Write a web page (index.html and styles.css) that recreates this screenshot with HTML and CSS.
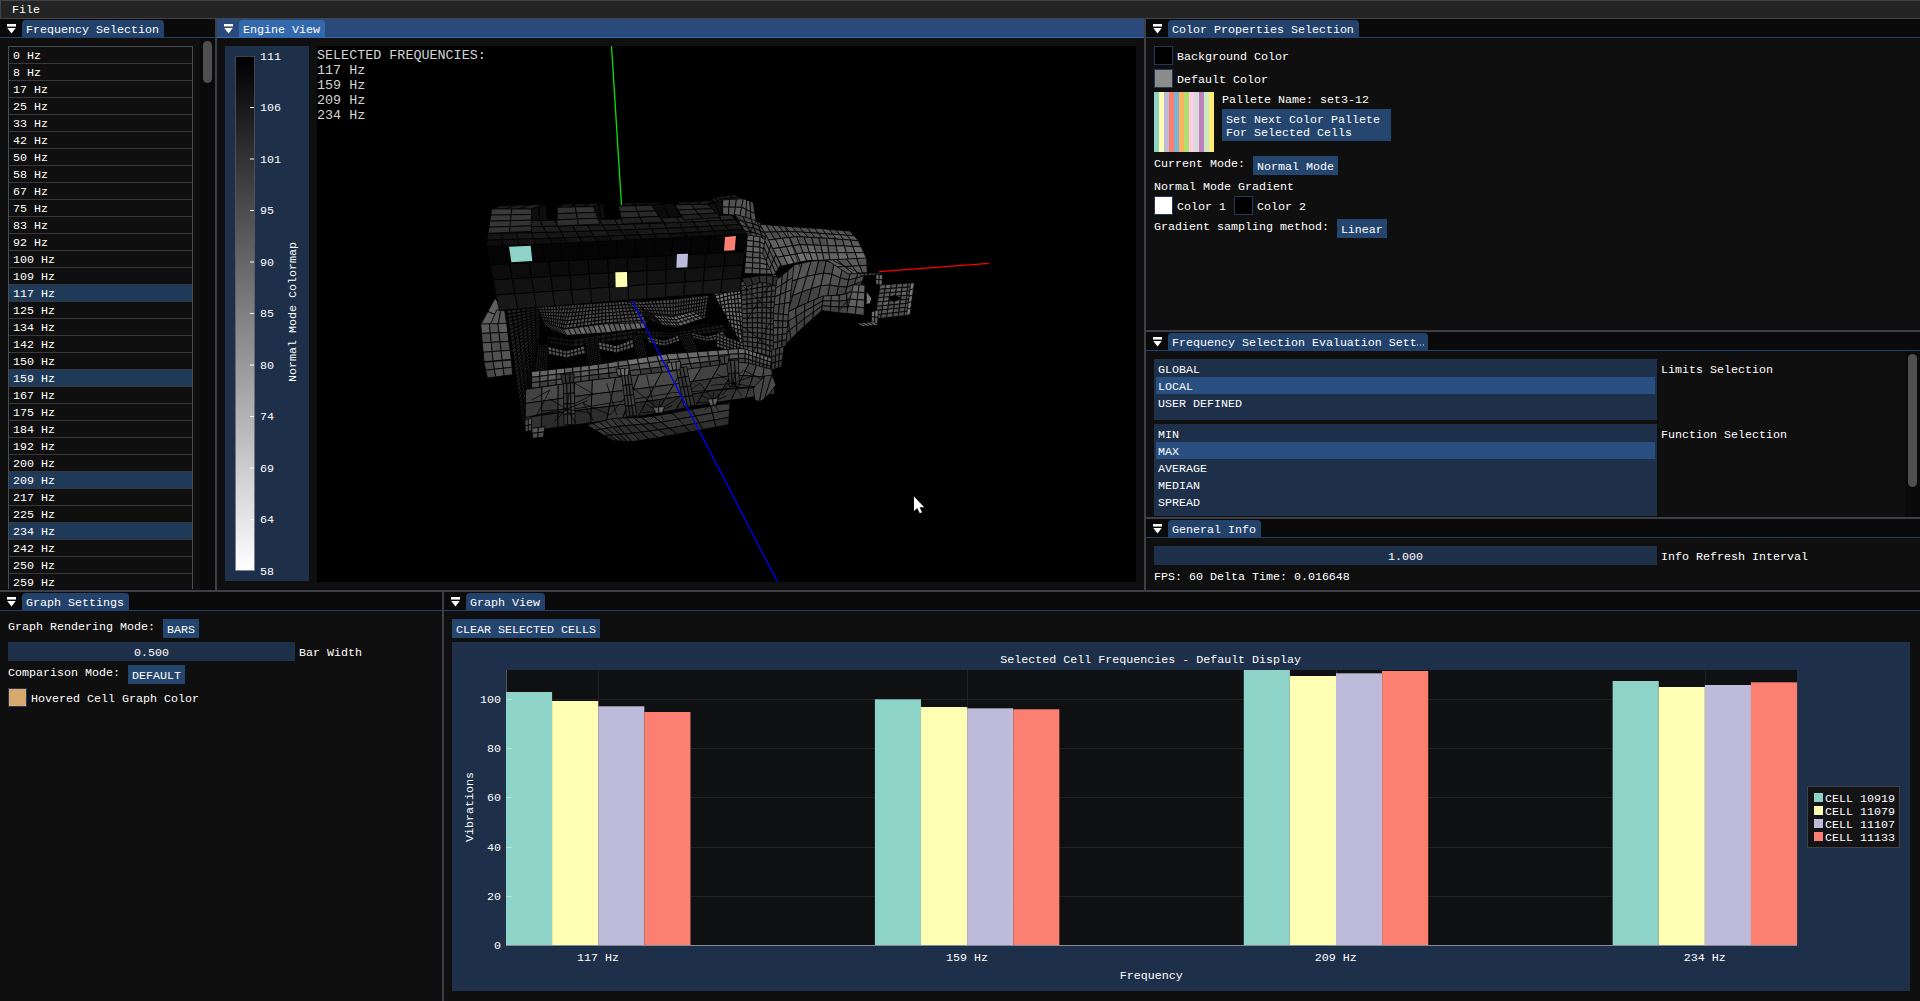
FILE: index.html
```html
<!DOCTYPE html>
<html lang="en">
<head>
<meta charset="utf-8">
<title>Engine Vibration Viewer</title>
<link rel="stylesheet" href="styles.css">
</head>
<body>
<svg class="defs" width="0" height="0"><symbol id="arrow" viewBox="0 0 9 10"><path d="M0 0h9v2H0z" fill="#fff"/><path d="M0 2h9v1H0z" fill="#999"/><path d="M.3 4h8.4L4.5 9.6z" fill="#fff"/></symbol></svg>
<div class="app">
  <nav class="menu"><span class="t">File</span></nav>
  <div class="upper">
    <section class="panel freq">
      <header class="bar"><svg class="arrow"><use href="#arrow"/></svg><span class="tab"><span class="t">Frequency Selection</span></span></header>
      <div class="freq-body"><div class="table" id="freqs"></div><div class="track"><div class="grab grab-freq"></div></div></div>
    </section>
    <section class="panel engine">
      <header class="bar focused"><svg class="arrow"><use href="#arrow"/></svg><span class="tab"><span class="t">Engine View</span></span></header>
      <div class="engine-body">
        <svg class="colormap" id="colormap" width="84" height="535" viewBox="0 0 84 535">
          <defs><linearGradient id="ramp" x1="0" y1="0" x2="0" y2="1"><stop offset="0" stop-color="#000"/><stop offset="1" stop-color="#fff"/></linearGradient></defs>
          <rect x="10.5" y="10.5" width="19" height="514" fill="url(#ramp)" stroke="#6e6e80" stroke-opacity=".5"/>
          <text transform="translate(71 266) rotate(-90)" text-anchor="middle">Normal Mode Colormap</text>
        </svg>
        <svg class="view" id="view" width="819" height="536" viewBox="0 0 819 536">
          <g id="model" transform="translate(143 124) scale(.33333)"></g>
          <path d="M294.5 0L304.5 159" stroke="#00e600" stroke-width="1.3" fill="none"/>
          <path d="M562 225.7L672 217.3" stroke="#ff0000" stroke-width="1.3" fill="none"/>
          <path d="M315 255L460.5 536" stroke="#0000f0" stroke-width="1.4" fill="none"/>
          <g class="hud"><text x="0" y="12.5">SELECTED FREQUENCIES:</text><text x="0" y="27.5">117 Hz</text><text x="0" y="42.5">159 Hz</text><text x="0" y="57.5">209 Hz</text><text x="0" y="72.5">234 Hz</text></g>
          <path d="M597 450.5v14.5l3.2-3 2.6 5.2 2.2-1-2.4-5h4.6z" fill="#fff"/>
        </svg>
      </div>
    </section>
    <div class="side">
      <section class="panel colors">
        <header class="bar"><svg class="arrow"><use href="#arrow"/></svg><span class="tab"><span class="t">Color Properties Selection</span></span></header>
        <div class="body">
          <div class="row"><i class="sw black"></i><span class="t lab">Background Color</span></div>
          <div class="row"><i class="sw gray"></i><span class="t lab">Default Color</span></div>
          <div class="row wide"><div class="palette" id="palette"></div><div class="stack"><span class="t">Pallete Name: set3-12</span><button class="btn big"><span class="t">Set Next Color Pallete</span><span class="t">For Selected Cells</span></button></div></div>
          <div class="row wide"><span class="t">Current Mode:</span><button class="btn"><span class="t">Normal Mode</span></button></div>
          <span class="t">Normal Mode Gradient</span>
          <div class="row wide"><div class="row"><i class="sw white"></i><span class="t lab">Color 1</span></div><div class="row"><i class="sw black"></i><span class="t lab">Color 2</span></div></div>
          <div class="row wide"><span class="t">Gradient sampling method:</span><button class="btn"><span class="t">Linear</span></button></div>
        </div>
      </section>
      <section class="panel eval">
        <header class="bar"><svg class="arrow"><use href="#arrow"/></svg><span class="tab"><span class="t">Frequency Selection Evaluation Sett<svg class="dots" viewBox="0 0 7 2"><path d="M0 .5h1v1H0zM3 .5h1v1H3zM6 .5h1v1H6z" fill="#fff"/></svg></span></span></header>
        <div class="eval-body">
          <div class="lists">
            <div class="row"><div class="list"><span class="t">GLOBAL</span><span class="t on">LOCAL</span><span class="t">USER DEFINED</span></div><span class="t lab">Limits Selection</span></div>
            <div class="row"><div class="list tall"><span class="t">MIN</span><span class="t on">MAX</span><span class="t">AVERAGE</span><span class="t">MEDIAN</span><span class="t">SPREAD</span></div><span class="t lab">Function Selection</span></div>
          </div>
          <div class="track"><div class="grab grab-eval"></div></div>
        </div>
      </section>
      <section class="panel info">
        <header class="bar"><svg class="arrow"><use href="#arrow"/></svg><span class="tab"><span class="t">General Info</span></span></header>
        <div class="body">
          <div class="row"><div class="field w503"><span class="t">1.000</span></div><span class="t lab">Info Refresh Interval</span></div>
          <span class="t">FPS: 60 Delta Time: 0.016648</span>
        </div>
      </section>
    </div>
  </div>
  <div class="lower">
    <section class="panel settings">
      <header class="bar"><svg class="arrow"><use href="#arrow"/></svg><span class="tab"><span class="t">Graph Settings</span></span></header>
      <div class="body">
        <div class="row wide"><span class="t">Graph Rendering Mode:</span><button class="btn"><span class="t">BARS</span></button></div>
        <div class="row"><div class="field w287"><span class="t">0.500</span></div><span class="t lab">Bar Width</span></div>
        <div class="row wide"><span class="t">Comparison Mode:</span><button class="btn"><span class="t">DEFAULT</span></button></div>
        <div class="row"><i class="sw tan"></i><span class="t lab">Hovered Cell Graph Color</span></div>
      </div>
    </section>
    <section class="panel graph">
      <header class="bar"><svg class="arrow"><use href="#arrow"/></svg><span class="tab"><span class="t">Graph View</span></span></header>
      <div class="body">
        <div class="row"><button class="btn"><span class="t">CLEAR SELECTED CELLS</span></button></div>
        <svg class="plot" id="plot" width="1458" height="349" viewBox="452 642 1458 349"></svg>
      </div>
    </section>
  </div>
</div>
<script src="app.js"></script>
</body>
</html>
```
FILE: styles.css
```css
* { box-sizing: border-box; }
body { margin: 0; background: #0f0f0f; color: #fff; font: 11.667px/11px "Liberation Mono", monospace; overflow: hidden; }
.defs { position: absolute; }
.app { width: 1920px; height: 1001px; display: flex; flex-direction: column; background: #3e3e46; }
.t { display: block; height: 13px; padding-top: 3px; line-height: 11px; white-space: pre; }
.menu { height: 19px; padding: 1px 11px; background: #242424; border: 1px solid #43434b; border-right: 0; }
.upper { height: 571px; display: flex; gap: 2px; }
.lower { flex: 1; display: flex; gap: 2px; margin-top: 2px; }
.panel { background: #0f0f0f; display: flex; flex-direction: column; overflow: hidden; }
.freq { width: 215px; }
.engine { width: 927px; }
.side { width: 774px; display: flex; flex-direction: column; gap: 2px; }
.colors { height: 311px; }
.eval { height: 185px; }
.info { height: 71px; }
.settings { width: 442px; }
.graph { width: 1476px; }

.bar { height: 19px; flex: none; display: flex; background: #0a0a0a; border-bottom: 1px solid #23426b; padding: 1px 0 0 7px; }
.arrow { width: 9px; height: 10px; margin: 4px 6px 0 0; }
.tab { height: 17px; padding: 2px 5px 0 4px; background: #23426b; border-radius: 4px 4px 0 0; }
.bar.focused { background: #294a7a; border-color: #3369ad; }
.focused .tab { background: #3369ad; }
.dots { width: 7px; height: 2px; margin-right: -1px; }
.body { padding: 8px; display: flex; flex-direction: column; gap: 4px; }
.row { display: flex; align-items: flex-start; gap: 4px; }
.row.wide { gap: 8px; }
.lab { margin-top: 3px; }
.btn { border: 0; margin: 0; color: inherit; font: inherit; text-align: left; height: 19px; padding: 3px 4px; background: #24456d; }
.btn.big { width: 169px; height: 32px; }
.stack { display: flex; flex-direction: column; gap: 4px; }
.sw { width: 19px; height: 19px; border: 1px solid #25365a; }
.black { background: #000; }
.gray { background: #8c8c8c; }
.white { background: #fff; }
.tan { background: #d6a96f; }
.palette { width: 60px; height: 60px; display: flex; }
.palette i { flex: 1; }
.field { height: 19px; padding-top: 3px; background: #1d2f49; text-align: center; }
.w503 { width: 503px; }
.w287 { width: 287px; }

.freq-body { display: flex; height: 552px; padding-top: 8px; justify-content: space-between; }
.table { width: 185px; height: 543px; margin-left: 8px; border: 1px solid #4c4c55; border-bottom: 0; overflow: hidden; }
.table .t { height: 17px; padding: 4px 0 0 4px; border-bottom: 1px solid #38383f; }
.table .on { background: #1f3958; }
.track { width: 15px; background: #0a0a0a; margin-top: -8px; padding: 3px; }
.grab { width: 9px; border-radius: 5px; background: #4f4f4f; }
.grab-freq { height: 42px; }
.grab-eval { height: 133px; }

.engine-body { display: flex; gap: 8px; padding: 8px; }
.colormap { background: #1d2f49; }
.view { background: #000; }
svg text { fill: #fff; font: 11.667px "Liberation Mono", monospace; white-space: pre; }
svg .hud text { font-size: 13.4px; fill: #d4d4d4; }

.eval-body { display: flex; justify-content: space-between; height: 166px; padding-top: 8px; }
.lists { height: 157px; padding-left: 8px; display: flex; flex-direction: column; gap: 4px; overflow: hidden; }
.list { width: 503px; height: 61px; padding: 1px 2px; background: #1d2f49; }
.list.tall { height: 95px; }
.list .t { height: 17px; padding: 5px 2px 0; }
.list .on { background: #294f80; }
.plot { background: #1d2f49; }
```
FILE: app.js
```js
const NS = 'http://www.w3.org/2000/svg';
function add(parent, tag, attrs, text) {
  const el = document.createElementNS(NS, tag);
  for (const k in attrs) el.setAttribute(k, attrs[k]);
  if (text !== undefined) el.textContent = text;
  parent.appendChild(el);
  return el;
}

// Frequency table
const selected = [117, 159, 209, 234];
[0, 8, 17, 25, 33, 42, 50, 58, 67, 75, 83, 92, 100, 109, 117, 125, 134, 142, 150, 159, 167, 175, 184, 192, 200, 209, 217, 225, 234, 242, 250, 259].forEach(f => {
  const s = document.createElement('span');
  s.className = selected.includes(f) ? 't on' : 't';
  s.textContent = f + ' Hz';
  document.getElementById('freqs').appendChild(s);
});

// set3-12 palette
['#8dd3c7', '#ffffb3', '#bebada', '#fb8072', '#80b1d3', '#fdb462', '#b3de69', '#fccde5', '#d9d9d9', '#bc80bd', '#ccebc5', '#ffed6f'].forEach(c => {
  const i = document.createElement('i');
  i.style.background = c;
  document.getElementById('palette').appendChild(i);
});

// Colormap scale
const cm = document.getElementById('colormap');
[111, 106, 101, 95, 90, 85, 80, 74, 69, 64, 58].forEach((v, i) => {
  const y = 10 + i * 51.5;
  add(cm, 'text', { x: 35, y: Math.floor(y + 4) }, v);
  if (i && i < 10) add(cm, 'rect', { x: 25, y: y - 0.5, width: 4, height: 1, fill: '#fff' });
});

// Bar chart
const plot = document.getElementById('plot');
const colors = ['#8dd3c7', '#ffffb3', '#bebada', '#fb8072'];
add(plot, 'rect', { x: 506, y: 670, width: 1291, height: 275, fill: '#0f1012' });
for (let v = 0; v <= 100; v += 20) {
  const y = Math.round(945 - v * 2.459);
  if (v) add(plot, 'rect', { x: 506, y: y, width: 1291, height: 1, fill: '#222224' });
  add(plot, 'text', { x: 501, y: y + 4, 'text-anchor': 'end' }, v);
}
for (let g = 0; g < 4; g++) add(plot, 'rect', { x: Math.round(598 + 368.9 * g), y: 670, width: 1, height: 275, fill: '#222224' });
add(plot, 'rect', { x: 506, y: 670, width: 1, height: 275, fill: '#55565c' });
[[692, 701, 706.3, 712], [699.3, 707, 708.3, 709.3], [670, 676, 673.3, 671], [681, 687, 685, 682.3]].forEach((tops, g) => {
  tops.forEach((y, i) => add(plot, 'rect', { x: 506 + 46.11 * (8 * g + i), y: y, width: 46.11, height: 945 - y, fill: colors[i] }));
  add(plot, 'text', { x: 598 + 368.9 * g, y: 961, 'text-anchor': 'middle' }, selected[g] + ' Hz');
});
for (let v = 20; v <= 100; v += 20) add(plot, 'rect', { x: 506, y: Math.round(945 - v * 2.459), width: 6, height: 1, fill: '#fff', opacity: 0.35 });
add(plot, 'rect', { x: 506, y: 945, width: 1291, height: 1, fill: '#858b98' });
add(plot, 'text', { x: 1150.7, y: 662.5, 'text-anchor': 'middle' }, 'Selected Cell Frequencies - Default Display');
add(plot, 'text', { x: 1151.2, y: 978.5, 'text-anchor': 'middle' }, 'Frequency');
add(plot, 'text', { transform: 'translate(472.5 807) rotate(-90)', 'text-anchor': 'middle' }, 'Vibrations');
add(plot, 'rect', { x: 1807.5, y: 786.5, width: 92, height: 61, fill: '#141417', stroke: '#414149' });
[10919, 11079, 11107, 11133].forEach((c, i) => {
  add(plot, 'rect', { x: 1814, y: 793 + 13 * i, width: 9, height: 9, fill: colors[i] });
  add(plot, 'text', { x: 1825, y: 801.5 + 13 * i }, 'CELL ' + c);
});

// Wireframe mesh: each patch is a ruled surface between an upper and a lower polyline
const model = document.getElementById('model');
let seed = 7;
const rnd = () => (seed = (seed * 16807) % 2147483647) / 2147483647;
function at(line, t) {
  const p = Math.min(t * (line.length - 1), line.length - 1.0001), i = Math.floor(p), f = p - i;
  return [line[i][0] * (1 - f) + line[i + 1][0] * f, line[i][1] * (1 - f) + line[i + 1][1] * f];
}
function patch(a, b, cols, rows, g0, g1, sw) {
  const P = (u, v) => {
    const p = at(a, u), q = at(b, u);
    return (p[0] * (1 - v) + q[0] * v).toFixed(1) + ',' + (p[1] * (1 - v) + q[1] * v).toFixed(1);
  };
  for (let r = 0; r < rows; r++) for (let c = 0; c < cols; c++) {
    const k = Math.max(0, Math.round(g0 + (g1 - g0) * (r + 0.5) / rows + (rnd() - 0.5) * g0 * 0.22));
    const u = c / cols, U = (c + 1) / cols, v = r / rows, V = (r + 1) / rows;
    add(model, 'polygon', { points: [P(u, v), P(U, v), P(U, V), P(u, V)].join(' '), fill: `rgb(${k},${k},${k})`, stroke: '#000', 'stroke-width': sw || 2.4 });
  }
}
const poly = (pts, fill) => add(model, 'polygon', { points: pts, fill: fill });
const wires = d => add(model, 'path', { d: d, stroke: '#000', 'stroke-width': 2.2, fill: 'none' });

// bell housing
patch([[740, 95], [775, 80], [825, 74]], [[760, 104], [790, 95], [850, 88]], 6, 2, 30, 36);
patch([[788, 90], [850, 86], [880, 97]], [[788, 132], [840, 138], [890, 165]], 6, 2, 88, 80);
patch([[825, 133], [885, 150], [920, 170]], [[862, 200], [900, 205], [945, 230]], 5, 4, 68, 75);
patch([[862, 195], [900, 200], [945, 225]], [[853, 310], [900, 312], [940, 312]], 4, 7, 98, 84);
wires('M835 140L880 190M890 150L865 195M900 170L945 215');
// gearbox
patch([[900, 163], [980, 169], [1080, 176], [1170, 183]], [[925, 210], [1010, 200], [1100, 205], [1195, 212]], 13, 2, 80, 86);
patch([[925, 210], [1010, 200], [1100, 205], [1195, 212]], [[965, 288], [1040, 272], [1110, 270], [1220, 266]], 12, 3, 84, 108);
patch([[1000, 285], [1060, 272], [1110, 272], [1165, 310], [1220, 300]], [[955, 440], [1020, 408], [1090, 378], [1150, 375], [1200, 352]], 9, 3, 84, 66);
patch([[955, 440], [1020, 408], [1090, 378], [1150, 375], [1200, 352]], [[975, 525], [1020, 480], [1085, 422], [1150, 430], [1215, 435]], 10, 3, 74, 62);
patch([[1100, 270], [1220, 264]], [[1165, 312], [1222, 308]], 4, 2, 84, 96);
patch([[918, 195], [962, 285]], [[908, 250], [940, 320]], 3, 3, 78, 82);
wires('M975 168L1020 290M1120 272L1200 310M1000 286L960 350L950 430M1190 355L1140 420');
// output flange
patch([[1260, 345], [1362, 338]], [[1245, 447], [1350, 435]], 6, 8, 92, 82);
patch([[1352, 340], [1363, 338]], [[1340, 436], [1350, 434]], 1, 5, 115, 110);
poly('1284,385 1302,375 1324,384 1302,396', '#000');
patch([[1198, 310], [1268, 308]], [[1205, 318], [1250, 316]], 5, 1, 70, 70);
patch([[1248, 314], [1268, 314]], [[1247, 342], [1266, 346]], 2, 2, 115, 100);
poly('1205,340 1225,316 1248,318 1246,400 1236,450 1215,430 1200,395', '#000');
poly('1220,366 1234,385 1230,400 1220,402', '#777');
patch([[1180, 345], [1215, 345]], [[1160, 430], [1212, 436]], 2, 4, 98, 80);
patch([[1235, 425], [1255, 420]], [[1234, 455], [1253, 464]], 2, 2, 108, 98);
patch([[1190, 460], [1240, 455]], [[1210, 470], [1255, 465]], 4, 1, 105, 100);
// flywheel housing
patch([[740, 375], [800, 355], [850, 340]], [[775, 515], [820, 530], [870, 560]], 10, 15, 108, 98, 2.6);
patch([[843, 335], [900, 322], [950, 312]], [[850, 555], [900, 565], [940, 580]], 7, 16, 62, 74);
wires('M850 350L930 420M940 330L860 450M850 470L940 540M935 450L870 560');
patch([[845, 325], [910, 315], [960, 322]], [[860, 350], [910, 335], [958, 352]], 5, 1, 45, 45);
patch([[950, 330], [1002, 286]], [[940, 430], [985, 435]], 3, 4, 78, 72);
patch([[940, 430], [985, 435]], [[940, 540], [978, 528]], 3, 5, 72, 64);
patch([[935, 540], [972, 530]], [[935, 600], [965, 590]], 3, 3, 62, 56);
// crankcase interior
poly('140,415 760,370 860,550 230,620', '#020202');
patch([[140, 420], [240, 412]], [[190, 775], [238, 600]], 7, 30, 30, 34, 2.8);
patch([[235, 412], [380, 402], [530, 392]], [[255, 465], [310, 488], [430, 470], [560, 460]], 32, 7, 68, 78);
patch([[245, 450], [310, 478], [430, 462], [555, 458]], [[275, 480], [320, 496], [440, 488], [560, 474]], 24, 1, 98, 98);
patch([[500, 398], [640, 388], [745, 376]], [[565, 448], [640, 472], [735, 445]], 26, 7, 74, 72);
patch([[545, 415], [580, 435], [640, 440], [700, 425]], [[575, 452], [610, 465], [660, 468], [730, 445]], 18, 3, 104, 96);
patch([[560, 468], [640, 480], [740, 460]], [[600, 490], [680, 488], [790, 478]], 26, 3, 40, 40);
patch([[262, 498], [340, 508], [520, 480], [640, 488], [790, 462]], [[265, 520], [340, 530], [520, 505], [640, 500], [800, 485]], 44, 2, 24, 24);
patch([[235, 525], [265, 525]], [[224, 608], [262, 598]], 5, 16, 60, 55);
patch([[375, 510], [415, 503]], [[388, 592], [424, 582]], 7, 14, 54, 50);
patch([[518, 500], [545, 492]], [[536, 572], [562, 562]], 5, 12, 52, 50);
patch([[652, 495], [690, 488]], [[686, 556], [714, 546]], 6, 10, 48, 46);
patch([[264, 530], [320, 543], [372, 528]], [[266, 552], [320, 563], [376, 550]], 10, 2, 92, 86);
patch([[415, 516], [470, 527], [518, 508]], [[418, 538], [470, 548], [522, 532]], 10, 2, 92, 86);
patch([[560, 500], [612, 512], [655, 496]], [[566, 518], [612, 528], [660, 513]], 9, 2, 86, 82);
patch([[694, 488], [740, 500], [788, 485]], [[700, 504], [742, 514], [800, 502]], 9, 2, 86, 80);
patch([[770, 490], [850, 520]], [[770, 530], [850, 555]], 8, 4, 84, 76);
// oil pan rail and crankcase side
patch([[215, 605], [400, 585], [620, 552], [850, 535], [935, 565]], [[215, 655], [400, 630], [640, 605], [850, 578], [930, 600]], 30, 3, 112, 56);
patch([[197, 658], [380, 632], [640, 603], [850, 575], [935, 598]], [[195, 785], [380, 760], [560, 735], [780, 695], [945, 672]], 15, 3, 74, 44);
wires('M215 738L640 668L935 650M215 690L270 660L230 735L320 715L400 672L345 640M400 752L370 700L450 735L520 655L600 720L720 640L760 690L850 600L930 640M440 640L470 735M560 615L580 700');
patch([[880, 655], [930, 600], [948, 645]], [[885, 690], [905, 697], [930, 668]], 3, 1, 78, 70);
patch([[195, 750], [215, 745]], [[196, 785], [214, 782]], 2, 2, 92, 84);
patch([[215, 775], [255, 770]], [[218, 805], [250, 802]], 2, 2, 86, 80);
patch([[380, 765], [460, 745], [560, 742], [810, 698]], [[460, 812], [520, 815], [640, 795], [806, 764]], 13, 3, 56, 44);
patch([[310, 640], [342, 638]], [[312, 765], [346, 762]], 3, 4, 66, 54);
patch([[485, 615], [512, 612]], [[500, 740], [530, 736]], 3, 4, 68, 52);
patch([[648, 595], [680, 590]], [[672, 710], [704, 706]], 3, 4, 62, 48);
patch([[800, 572], [835, 570]], [[808, 650], [838, 648]], 3, 2, 62, 54);
[[320, 717, 75], [595, 724, 50], [758, 695, 50], [820, 640, 68]].forEach(([x, y, r]) => {
  let d = '';
  for (let i = 0; i < 7; i++) d += `M${x} ${y}L${(x + r * Math.cos(i * 0.9 + 0.3)).toFixed(0)} ${(y + r * 0.6 * Math.sin(i * 0.9 + 0.3)).toFixed(0)}`;
  wires(d);
  poly(`${x - 10},${y} ${x},${y - 4} ${x + 10},${y} ${x},${y + 6}`, '#050505');
});
patch([[302, 612], [343, 612]], [[308, 640], [340, 638]], 3, 1, 50, 44);
patch([[468, 597], [508, 594]], [[474, 618], [504, 616]], 3, 1, 104, 96);
patch([[620, 578], [662, 574]], [[628, 602], [660, 598]], 3, 1, 98, 90);
patch([[778, 560], [808, 556]], [[784, 582], [804, 580]], 2, 1, 70, 66);
patch([[578, 712], [614, 710]], [[588, 730], [606, 728]], 2, 1, 104, 98);
patch([[742, 688], [775, 684]], [[752, 708], [768, 704]], 2, 1, 90, 84);
// front cover, left
patch([[105, 385], [134, 422]], [[62, 464], [114, 460]], 1, 2, 98, 88);
patch([[110, 420], [134, 422]], [[90, 466], [140, 460]], 2, 1, 94, 90);
patch([[62, 462], [140, 460]], [[72, 575], [154, 568]], 3, 4, 88, 74);
patch([[72, 577], [154, 570]], [[82, 624], [158, 614]], 3, 2, 76, 70);
// cylinder head cover
patch([[120, 107], [258, 103]], [[95, 118], [215, 117]], 3, 1, 30, 30);
patch([[310, 102], [432, 99]], [[292, 113], [400, 110]], 3, 1, 24, 24);
patch([[500, 98], [620, 96]], [[475, 108], [575, 106]], 3, 1, 20, 20);
patch([[660, 96], [760, 92]], [[645, 106], [742, 104]], 3, 1, 24, 24);
patch([[215, 117], [258, 103]], [[215, 155], [262, 152]], 2, 1, 14, 14);
patch([[400, 110], [432, 99]], [[412, 148], [434, 148]], 2, 1, 14, 14);
patch([[575, 106], [640, 98]], [[600, 146], [660, 140]], 2, 1, 12, 12);
patch([[742, 104], [786, 92]], [[775, 138], [786, 134]], 2, 1, 14, 14);
patch([[88, 152], [250, 152], [440, 148], [640, 142], [815, 135]], [[78, 230], [290, 222], [480, 214], [670, 205], [862, 192]], 17, 4, 38, 14);
patch([[95, 117], [215, 117]], [[84, 190], [214, 184]], 2, 4, 62, 44);
patch([[292, 112], [400, 110]], [[291, 168], [420, 162]], 2, 3, 56, 38);
patch([[475, 108], [575, 106]], [[488, 162], [608, 156]], 2, 3, 46, 32);
patch([[645, 105], [742, 103]], [[672, 150], [782, 142]], 2, 3, 44, 30);
patch([[78, 230], [862, 192]], [[90, 284], [855, 246]], 14, 1, 4, 4, 1.5);
patch([[90, 284], [855, 246]], [[118, 421], [838, 364]], 13, 3, 9, 26);
poly('147,230 212,227 217,273 154,277', '#8dd3c7');
poly('466,307 501,306 502,350 467,352', '#ffffb3');
poly('651,252 684,251 682,292 649,293', '#bebada');
poly('795,201 828,198 824,241 792,242', '#fb8072');
```
